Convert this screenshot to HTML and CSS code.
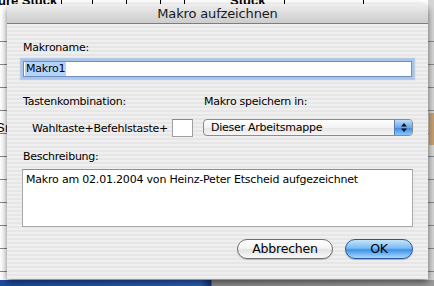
FILE: index.html
```html
<!DOCTYPE html>
<html lang="de">
<head>
<meta charset="utf-8">
<title>Makro aufzeichnen</title>
<link rel="stylesheet" href="styles.css">
</head>
<body>
<div class="sheet">
  <div class="topstrip">
    <span class="cell-text t1">ure Stück</span>
    <span class="cell-text t2">Stück</span>
  </div>
  <div class="leftstrip"><span class="cell-text t3">Sı</span></div>
  <div class="tan"></div>
  <div class="bluebar"></div>
  <div class="dialog">
    <div class="titlebar">Makro aufzeichnen</div>
    <div class="body">
      <div class="label">Makroname:</div>
      <div class="field"><span class="sel">Makro1</span></div>
      <div class="row">
        <div class="col-left">
          <div class="label">Tastenkombination:</div>
          <div class="keys"><span>Wahltaste+Befehlstaste+</span><div class="keybox"></div></div>
        </div>
        <div class="col-right">
          <div class="label">Makro speichern in:</div>
          <div class="popup">
            <span class="popup-text">Dieser Arbeitsmappe</span>
            <span class="stepper">
              <svg width="8" height="11" viewBox="0 0 8 11"><path d="M4 1 L7 4.5 L1 4.5 Z" fill="#111"/><path d="M4 10 L7 6.5 L1 6.5 Z" fill="#111"/></svg>
            </span>
          </div>
        </div>
      </div>
      <div class="label desc-label">Beschreibung:</div>
      <div class="textarea">Makro am 02.01.2004 von Heinz-Peter Etscheid aufgezeichnet</div>
      <div class="buttons">
        <div class="btn cancel">Abbrechen</div>
        <div class="btn ok">OK</div>
      </div>
    </div>
  </div>
</div>
</body>
</html>
```

FILE: styles.css
```css
html, body {
  margin: 0;
  padding: 0;
}
body {
  width: 434px;
  height: 286px;
  overflow: hidden;
  font-family: "DejaVu Sans", sans-serif;
}
.sheet {
  position: relative;
  width: 434px;
  height: 286px;
  background-color: #fff;
  background-image:
    linear-gradient(#000, #000),
    linear-gradient(#000, #000),
    linear-gradient(#000, #000),
    linear-gradient(#000, #000),
    linear-gradient(#000, #000),
    linear-gradient(#000, #000),
    linear-gradient(#000, #000),
    repeating-linear-gradient(to bottom, transparent 0, transparent 22px, #888 22px, #888 23px),
    linear-gradient(to right, #d6d6d6, #d6d6d6);
  background-size: 1px 6px, 1px 6px, 1px 6px, 1px 6px, 1px 6px, 1px 6px, 1px 6px, 434px 286px, 6px 286px;
  background-position: 61px 0, 92px 0, 126px 0, 160px 0, 184px 0, 284px 0, 363px 0, 0 19px, 428px 0;
  background-repeat: no-repeat;
}
.topstrip {
  position: absolute;
  left: 0;
  top: 0;
  width: 434px;
  height: 5px;
  overflow: hidden;
}
.leftstrip {
  position: absolute;
  left: 0;
  top: 118px;
  width: 7px;
  height: 16px;
  overflow: hidden;
}
.cell-text {
  position: absolute;
  font-family: "Liberation Sans", sans-serif;
  font-weight: bold;
  font-size: 13px;
  line-height: 13px;
  color: #000;
  white-space: nowrap;
}
.t1 { left: -2px; top: -6px; }
.t2 { left: 230px; top: -6px; }
.t3 { left: -4px; top: 3px; font-weight: normal; }
.tan {
  position: absolute;
  left: 429px;
  top: 113px;
  width: 5px;
  height: 32px;
  background: #c9a173;
}
.bluebar {
  position: absolute;
  left: 0;
  top: 280px;
  width: 434px;
  height: 6px;
  background: linear-gradient(to right, #1d4c9e 0, #2a5eb5 200px, #12336e 211px, #8c8c8c 212px, #9a9a9a 100%);
}
.dialog {
  position: absolute;
  left: 7px;
  top: 4px;
  width: 421px;
  height: 275px;
  border-radius: 6px 6px 0 0;
  background: repeating-linear-gradient(to bottom, #efefef 0, #efefef 2px, #e6e6e6 2px, #e6e6e6 4px);
  box-shadow: 0 3px 7px rgba(0,0,0,0.55);
  display: flex;
  flex-direction: column;
}
.titlebar {
  height: 19px;
  border-bottom: 1px solid #7d7d7d;
  border-radius: 6px 6px 0 0;
  background: linear-gradient(to bottom, #eeeeee, #dcdcdc 50%, #cdcdcd);
  font-size: 13px;
  line-height: 19px;
  letter-spacing: -0.15px;
  text-align: center;
  color: #1a1a1a;
}
.body {
  padding: 17px 15px 0 15px;
  display: flex;
  flex-direction: column;
}
.label {
  font-size: 11px;
  line-height: 14px;
  letter-spacing: -0.25px;
  color: #000;
  padding-left: 1px;
}
.field {
  margin-top: 6px;
  margin-left: 1px;
  margin-right: 1px;
  height: 14px;
  background: #fff;
  border: 1px solid #6e8fbf;
  box-shadow: 0 0 0 2px #a9c4ea, 0 0 1px 3px rgba(150,185,230,0.6);
  font-size: 11px;
  line-height: 14px;
  letter-spacing: -0.2px;
  padding-left: 1px;
}
.sel {
  background: #b4d3fb;
  display: inline-block;
  padding: 0 1px;
}
.row {
  margin-top: 18px;
  display: flex;
}
.col-left {
  width: 181px;
}
.col-right {
  flex: 1;
}
.keys {
  margin-top: 10px;
  display: flex;
  align-items: center;
  padding-left: 10px;
  font-size: 11px;
  letter-spacing: -0.25px;
  gap: 4px;
}
.keybox {
  width: 19px;
  height: 16px;
  background: #fff;
  border: 1px solid #a0a0a0;
  border-top-color: #8a8a8a;
}
.popup {
  margin-top: 10px;
  height: 15px;
  border: 1px solid #8b8b8b;
  border-radius: 4px;
  background: linear-gradient(to bottom, #ffffff, #f2f2f2 50%, #e4e4e4 51%, #f6f6f6);
  display: flex;
  align-items: center;
  overflow: hidden;
}
.popup-text {
  flex: 1;
  font-size: 11px;
  letter-spacing: -0.25px;
  padding-left: 7px;
}
.stepper {
  width: 17px;
  height: 15px;
  border-left: 1px solid #5a7fb8;
  background: linear-gradient(to bottom, #bcdcfb, #6aa8ec 50%, #3b87e0 51%, #8cc6f7);
  display: flex;
  align-items: center;
  justify-content: center;
}
.desc-label {
  margin-top: 13px;
}
.textarea {
  margin-top: 5px;
  background: #fff;
  border: 1px solid #a8a8a8;
  border-top-color: #8f8f8f;
  font-size: 11px;
  line-height: 14px;
  letter-spacing: -0.2px;
  padding: 3px 0 0 3px;
  box-sizing: border-box;
  height: 58px;
}
.buttons {
  margin-top: 12px;
  display: flex;
  justify-content: flex-end;
  gap: 12px;
}
.btn {
  height: 18px;
  border-radius: 10px;
  font-size: 12.5px;
  line-height: 18px;
  text-align: center;
  letter-spacing: -0.2px;
}
.cancel {
  width: 94px;
  border: 1px solid #707070;
  background: linear-gradient(to bottom, #ffffff, #f4f4f4 45%, #e2e2e2 55%, #fafafa);
  box-shadow: 0 1px 1px rgba(0,0,0,0.2);
}
.ok {
  width: 66px;
  border: 1px solid #30539c;
  background: linear-gradient(to bottom, #c6e3fb, #7bbcf4 45%, #3e92e8 55%, #a8dafd);
  box-shadow: 0 1px 1px rgba(0,0,0,0.25);
}
```
